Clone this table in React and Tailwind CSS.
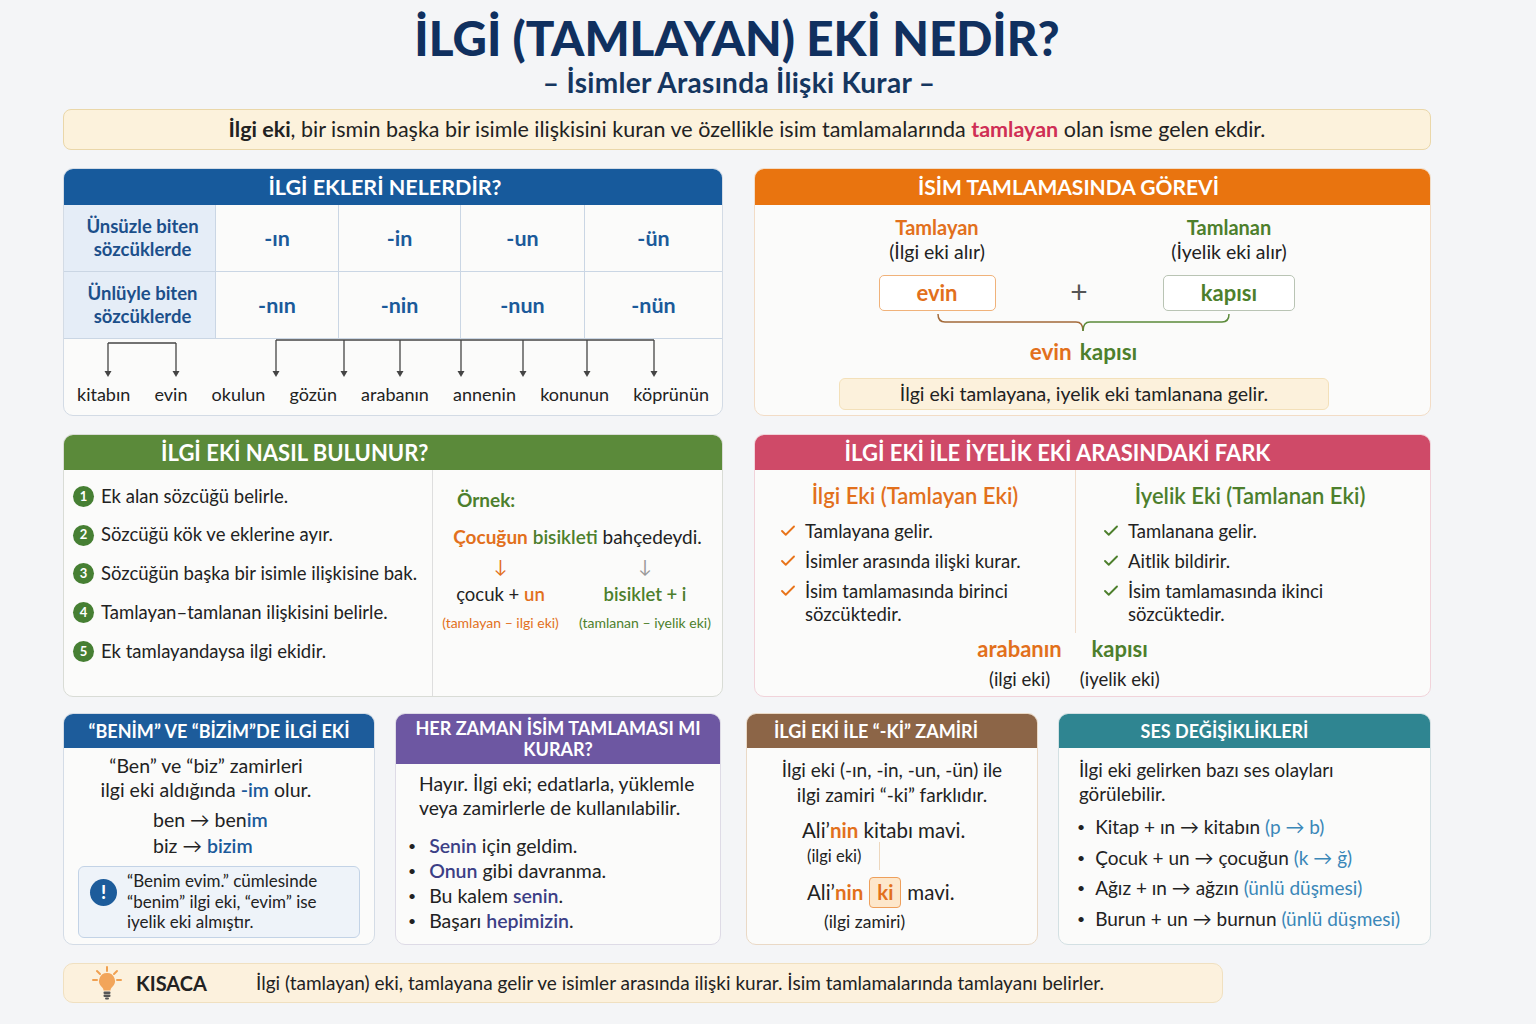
import { Check } from "lucide-react";

const Head = ({ bg, className = "", children }) => (
  <div className={`${bg} text-white font-bold flex items-center justify-center ${className}`}>
    {children}
  </div>
);

const Card = ({ className = "", children }) => (
  <div className={`rounded-[10px] border overflow-hidden flex flex-col bg-[#fbfbfa] ${className}`}>
    {children}
  </div>
);

const suffixRows = [
  { label: ["Ünsüzle biten", "sözcüklerde"], items: ["-ın", "-in", "-un", "-ün"] },
  { label: ["Ünlüyle biten", "sözcüklerde"], items: ["-nın", "-nin", "-nun", "-nün"] },
];

const words = ["kitabın", "evin", "okulun", "gözün", "arabanın", "annenin", "konunun", "köprünün"];
const arrowX = [44, 112, 212, 280, 336, 397, 459, 523, 590];

const steps = [
  "Ek alan sözcüğü belirle.",
  "Sözcüğü kök ve eklerine ayır.",
  "Sözcüğün başka bir isimle ilişkisine bak.",
  "Tamlayan–tamlanan ilişkisini belirle.",
  "Ek tamlayandaysa ilgi ekidir.",
];

const Bulb = () => (
  <svg width="30" height="34" viewBox="0 0 30 34">
    <g stroke="#f0a050" strokeWidth="2" strokeLinecap="round">
      <line x1="15" y1="1" x2="15" y2="5" />
      <line x1="5" y1="5" x2="8" y2="8" />
      <line x1="25" y1="5" x2="22" y2="8" />
      <line x1="1" y1="14" x2="5" y2="14" />
      <line x1="25" y1="14" x2="29" y2="14" />
    </g>
    <path d="M15 7a8 8 0 0 0-5 14.2c1 1 1.5 2 1.5 3.3h7c0-1.3.5-2.3 1.5-3.3A8 8 0 0 0 15 7z" fill="#f2a55a" />
    <rect x="11.5" y="25.5" width="7" height="2.5" rx="1" fill="#555" />
    <rect x="11.5" y="28.5" width="7" height="2.5" rx="1" fill="#555" />
    <rect x="13" y="31.5" width="4" height="2" rx="1" fill="#555" />
  </svg>
);

const Em = ({ children }) => <b className="text-[#3c3f86] font-semibold">{children}</b>;

export default function App() {
  return (
    <div className="min-h-[1024px] w-[1536px] bg-[#f4f5f7] font-[Lato,'Noto_Sans',sans-serif] text-[#222] pl-[63px] pr-[105px] pt-[8px]">
      {/* Title */}
      <h1 className="text-center font-black text-[#10305f] text-[47.5px] leading-[60px] pr-[20px]">
        İLGİ (TAMLAYAN) EKİ NEDİR?
      </h1>
      <div className="text-center font-bold text-[#15365f] text-[28px] leading-[28px] tracking-[0.3px] pr-[16px]">
        – İsimler Arasında İlişki Kurar –
      </div>
      <div className="mt-[13px] h-[41px] rounded-[8px] border border-[#ead7a9] bg-[#fcf2dc] flex items-center justify-center text-[21.5px]">
        <span>
          <b>İlgi eki</b>, bir ismin başka bir isimle ilişkisini kuran ve özellikle isim tamlamalarında{" "}
          <b className="text-[#cf2f55]">tamlayan</b> olan isme gelen ekdir.
        </span>
      </div>

      {/* Row 1 */}
      <div className="mt-[18px] grid grid-cols-[660px_677px] gap-[31px]">
        <Card className="h-[248px] border-[#d3dbe5]">
          <Head bg="bg-[#175a9c]" className="h-[36px] pr-[16px] text-[21.5px]">İLGİ EKLERİ NELERDİR?</Head>
          <div className="grid grid-cols-[152px_123px_122px_124px_1fr]">
            {suffixRows.map((r, i) => (
              <div key={i} className="contents">
                <div className="h-[67px] bg-[#e5edf7] border-r border-b border-[#cad6e4] flex flex-col items-center justify-center pl-[6px] text-[18.5px] leading-[23px] font-bold text-[#1c4f8a]">
                  <span>{r.label[0]}</span>
                  <span>{r.label[1]}</span>
                </div>
                {r.items.map((s, j) => (
                  <div
                    key={j}
                    className="h-[67px] border-b border-r last:border-r-0 border-[#cad6e4] flex items-center justify-center text-[21.5px] font-bold text-[#1b5a9a]"
                  >
                    {s}
                  </div>
                ))}
              </div>
            ))}
          </div>
          <svg width="658" height="40" viewBox="0 0 658 40" className="block">
            <g stroke="#444" strokeWidth="1.3" fill="none">
              <path d="M44 4H112" />
              <path d="M212 1H590" />
              {arrowX.map((x, i) => (
                <line key={i} x1={x} y1={i < 2 ? 4 : 1} x2={x} y2="33" />
              ))}
            </g>
            {arrowX.map((x, i) => (
              <path key={i} d={`M${x - 3.5} 32L${x + 3.5} 32L${x} 38Z`} fill="#444" />
            ))}
          </svg>
          <div className="mt-[5px] flex justify-between px-[13px] text-[18px] leading-[20px] text-[#222]">
            {words.map((w) => (
              <span key={w}>{w}</span>
            ))}
          </div>
        </Card>

        <Card className="h-[248px] border-[#f2dcc6]">
          <Head bg="bg-[#e9740f]" className="h-[36px] pr-[48px] text-[21px]">İSİM TAMLAMASINDA GÖREVİ</Head>
          <div className="flex pl-[62px] pt-[10px] text-[19.5px] leading-[24px]">
            <div className="w-[240px] flex flex-col items-center">
              <span className="font-bold text-[20px] text-[#e2701c]">Tamlayan</span>
              <span className="mt-[1px]">(İlgi eki alır)</span>
              <div className="mt-[11px] w-[117px] h-[36px] rounded-[5px] border border-[#f0b27a] bg-white flex items-center justify-center text-[22px] font-bold text-[#e2701c]">
                evin
              </div>
            </div>
            <div className="w-[44px] pt-[58px]">
              <div className="h-[36px] flex items-center justify-center text-[30px] text-[#555]">+</div>
            </div>
            <div className="w-[256px] flex flex-col items-center">
              <span className="font-bold text-[20px] text-[#4d7f2c]">Tamlanan</span>
              <span className="mt-[1px]">(İyelik eki alır)</span>
              <div className="mt-[11px] w-[132px] h-[36px] rounded-[5px] border border-[#b9c4b4] bg-white flex items-center justify-center text-[22px] font-bold text-[#4d7f2c]">
                kapısı
              </div>
            </div>
          </div>
          <div className="ml-[182px] w-[293px] mt-[2px] flex flex-col items-center">
            <svg width="293" height="20" viewBox="0 0 293 20" className="block">
              <path d="M1 1Q1 9 8 9H139Q146 9 146 18" stroke="#a36a3a" strokeWidth="1.5" fill="none" />
              <path d="M146 18Q146 9 153 9H285Q292 9 292 1" stroke="#5b8a3a" strokeWidth="1.5" fill="none" />
            </svg>
            <div className="text-[22.5px] font-bold leading-[26px] mt-[6px] flex gap-[8px]">
              <span className="text-[#e2701c]">evin</span>
              <span className="text-[#4d7f2c]">kapısı</span>
            </div>
          </div>
          <div className="ml-[84px] w-[490px] mt-[13px] h-[32px] rounded-[6px] border border-[#f3e0b9] bg-[#fcf1dc] flex items-center justify-center text-[19.5px]">
            İlgi eki tamlayana, iyelik eki tamlanana gelir.
          </div>
        </Card>
      </div>

      {/* Row 2 */}
      <div className="mt-[18px] grid grid-cols-[660px_677px] gap-[31px]">
        <Card className="h-[263px] border-[#d9dcd6]">
          <Head bg="bg-[#5b8a3a]" className="h-[35px] !justify-start pl-[97px] text-[22px]">İLGİ EKİ NASIL BULUNUR?</Head>
          <div className="flex-1 grid grid-cols-[369px_1fr]">
            <div className="border-r border-[#dedede] pt-[7px] pl-[9px] flex flex-col">
              {steps.map((s, i) => (
                <div key={i} className="h-[38.8px] flex items-center gap-[7px] text-[18.5px]">
                  <span className="w-[21px] h-[21px] rounded-full bg-[#467f33] text-white text-[13px] font-bold flex items-center justify-center shrink-0">
                    {i + 1}
                  </span>
                  {s}
                </div>
              ))}
            </div>
            <div className="pt-[18px] flex flex-col">
              <div className="pl-[24px] text-[19px] font-bold text-[#4d7f2c] leading-[24px]">Örnek:</div>
              <div className="mt-[13px] text-center text-[19px] leading-[24px]">
                <span className="font-bold text-[#e2701c]">Çocuğun</span>{" "}
                <span className="font-semibold text-[#4d7f2c]">bisikleti</span> bahçedeydi.
              </div>
              <div className="grid grid-cols-[135px_1fr]">
                <div className="flex flex-col items-center">
                  <span className="text-[#e2701c] text-[18px] leading-[30px] mt-[2px]">↓</span>
                  <span className="text-[18.5px] leading-[26px]">
                    çocuk + <span className="text-[#e2701c] font-semibold">un</span>
                  </span>
                  <span className="text-[14px] leading-[28px] mt-[2px] text-[#e2701c]">(tamlayan – ilgi eki)</span>
                </div>
                <div className="flex flex-col items-center">
                  <span className="text-[#999] text-[18px] leading-[30px] mt-[2px]">↓</span>
                  <span className="text-[18.5px] leading-[26px] text-[#4d7f2c] font-semibold">bisiklet + i</span>
                  <span className="text-[14px] leading-[28px] mt-[2px] text-[#4d7f2c]">(tamlanan – iyelik eki)</span>
                </div>
              </div>
            </div>
          </div>
        </Card>

        <Card className="h-[263px] border-[#f1d3da]">
          <Head bg="bg-[#cf4a68]" className="h-[35px] pr-[70px] text-[22px]">İLGİ EKİ İLE İYELİK EKİ ARASINDAKİ FARK</Head>
          <div className="grid grid-cols-[321px_1fr] h-[163px]">
            <div className="border-r border-[#f0dccb] pt-[13px]">
              <div className="text-center text-[22px] font-semibold text-[#e2701c] leading-[26px]">İlgi Eki (Tamlayan Eki)</div>
              <ul className="mt-[11px] pl-[24px] flex flex-col gap-[7px] text-[18.5px] leading-[23px]">
                <li className="flex gap-[8px]"><Check size={18} strokeWidth={2.5} className="text-[#e8741a] mt-[2px] shrink-0" />Tamlayana gelir.</li>
                <li className="flex gap-[8px]"><Check size={18} strokeWidth={2.5} className="text-[#e8741a] mt-[2px] shrink-0" />İsimler arasında ilişki kurar.</li>
                <li className="flex gap-[8px]"><Check size={18} strokeWidth={2.5} className="text-[#e8741a] mt-[2px] shrink-0" /><span>İsim tamlamasında birinci<br />sözcüktedir.</span></li>
              </ul>
            </div>
            <div className="pt-[13px]">
              <div className="text-center text-[22px] font-semibold text-[#4d7f2c] leading-[26px] pr-[6px]">İyelik Eki (Tamlanan Eki)</div>
              <ul className="mt-[11px] pl-[26px] flex flex-col gap-[7px] text-[18.5px] leading-[23px]">
                <li className="flex gap-[8px]"><Check size={18} strokeWidth={2.5} className="text-[#4d7f2c] mt-[2px] shrink-0" />Tamlanana gelir.</li>
                <li className="flex gap-[8px]"><Check size={18} strokeWidth={2.5} className="text-[#4d7f2c] mt-[2px] shrink-0" />Aitlik bildirir.</li>
                <li className="flex gap-[8px]"><Check size={18} strokeWidth={2.5} className="text-[#4d7f2c] mt-[2px] shrink-0" /><span>İsim tamlamasında ikinci<br />sözcüktedir.</span></li>
              </ul>
            </div>
          </div>
          <div className="flex justify-center gap-[18px] pr-[48px] mt-[3px]">
            <div className="flex flex-col items-center">
              <span className="text-[22px] font-bold text-[#e2701c] leading-[26px]">arabanın</span>
              <span className="text-[18.5px] leading-[24px] mt-[5px]">(ilgi eki)</span>
            </div>
            <div className="flex flex-col items-center">
              <span className="text-[22px] font-bold text-[#4d7f2c] leading-[26px]">kapısı</span>
              <span className="text-[18.5px] leading-[24px] mt-[5px]">(iyelik eki)</span>
            </div>
          </div>
        </Card>
      </div>

      {/* Row 3 */}
      <div className="mt-[16px] flex gap-[20px]">
        <Card className="w-[312px] h-[232px] border-[#d4dce6]">
          <Head bg="bg-[#1d5c9b]" className="h-[34px] text-[18px]">“BENİM” VE “BİZİM”DE İLGİ EKİ</Head>
          <div className="pt-[6px] pr-[26px] text-center text-[19.5px] leading-[24px]">
            <div>“Ben” ve “biz” zamirleri</div>
            <div>
              ilgi eki aldığında <span className="text-[#1b5a9a] font-semibold">-im</span> olur.
            </div>
          </div>
          <div className="pl-[89px] mt-[5px] text-[19.5px] leading-[26px]">
            <div>ben → ben<span className="text-[#1b5a9a] font-semibold">im</span></div>
            <div>biz → <span className="text-[#1b5a9a] font-semibold">bizim</span></div>
          </div>
          <div className="mx-[14px] mt-[7px] h-[72px] rounded-[6px] border border-[#c3d3e6] bg-[#eef3f9] flex items-center gap-[10px] pl-[11px]">
            <span className="w-[27px] h-[27px] rounded-full bg-[#1d5c9b] text-white font-black text-[18px] flex items-center justify-center shrink-0 -mt-[20px]">!</span>
            <div className="text-[17px] leading-[20.5px]">
              “Benim evim.” cümlesinde
              <br />“benim” ilgi eki, “evim” ise
              <br />iyelik eki almıştır.
            </div>
          </div>
        </Card>

        <Card className="w-[326px] h-[232px] mr-[5px] border-[#dedbe6]">
          <Head bg="bg-[#6d57a2]" className="h-[50px] text-[18px] leading-[21px] text-center">
            HER ZAMAN İSİM TAMLAMASI MI
            <br />
            KURAR?
          </Head>
          <div className="pt-[8px] pl-[23px] text-[19.3px] leading-[24px]">
            Hayır. İlgi eki; edatlarla, yüklemle
            <br />
            veya zamirlerle de kullanılabilir.
          </div>
          <ul className="mt-[13px] pl-[12px] text-[19.5px] leading-[25px]">
            {[
              [<Em key="a">Senin</Em>, " için geldim."],
              [<Em key="a">Onun</Em>, " gibi davranma."],
              ["Bu kalem ", <Em key="a">senin</Em>, "."],
              ["Başarı ", <Em key="a">hepimizin</Em>, "."],
            ].map((c, i) => (
              <li key={i} className="flex gap-[13px]">
                <span className="text-[14px]">•</span>
                <span>{c}</span>
              </li>
            ))}
          </ul>
        </Card>

        <Card className="w-[292px] h-[232px] border-[#ead9c6]">
          <Head bg="bg-[#8c6547]" className="h-[34px] text-[18px] pr-[32px]">İLGİ EKİ İLE “-Kİ” ZAMİRİ</Head>
          <div className="pt-[9px] text-center text-[19px] leading-[25px]">
            <div>İlgi eki (-ın, -in, -un, -ün) ile</div>
            <div>ilgi zamiri “-ki” farklıdır.</div>
          </div>
          <div className="pl-[55px] mt-[11px] text-[20.5px] leading-[24px]">
            Ali’<b className="text-[#e2701c]">nin</b> kitabı mavi.
          </div>
          <div className="flex pl-[60px] h-[30px] items-start">
            <span className="text-[16.5px] leading-[20px] mt-[4px]">(ilgi eki)</span>
            <span className="ml-[18px] w-px h-[28px] bg-[#edd7bd]" />
          </div>
          <div className="pl-[60px] mt-[3px] text-[20.5px] leading-[34px] flex items-center">
            Ali’<b className="text-[#e2701c]">nin</b>
            <span className="mx-[6px] w-[32px] h-[31px] rounded-[4px] border border-[#ee9f5b] bg-[#fde7cb] flex items-center justify-center font-bold text-[#e2701c]">ki</span>
            mavi.
          </div>
          <div className="pl-[77px] text-[17.5px] leading-[20px] mt-[3px]">(ilgi zamiri)</div>
        </Card>

        <Card className="w-[373px] h-[232px] border-[#d3e0e3]">
          <Head bg="bg-[#2f8591]" className="h-[34px] text-[18px] pr-[40px]">SES DEĞİŞİKLİKLERİ</Head>
          <div className="pt-[10px] pl-[20px] text-[18.8px] leading-[24px]">
            İlgi eki gelirken bazı ses olayları
            <br />
            görülebilir.
          </div>
          <ul className="mt-[6px] pl-[18px] text-[19px] leading-[30.5px]">
            {[
              ["Kitap + ın → kitabın ", "(p → b)"],
              ["Çocuk + un → çocuğun ", "(k → ğ)"],
              ["Ağız + ın → ağzın ", "(ünlü düşmesi)"],
              ["Burun + un → burnun ", "(ünlü düşmesi)"],
            ].map(([a, b], i) => (
              <li key={i} className="flex gap-[10px]">
                <span className="text-[14px]">•</span>
                <span>
                  {a}
                  <span className="text-[#3a87b8]">{b}</span>
                </span>
              </li>
            ))}
          </ul>
        </Card>
      </div>

      {/* Bottom */}
      <div className="mt-[18px] w-[1160px] h-[40px] rounded-[10px] border border-[#f0e0c0] bg-[#fcf1dd] flex items-center pl-[28px]">
        <Bulb />
        <span className="ml-[14px] w-[120px] font-bold text-[20px]">KISACA</span>
        <span className="text-[19px]">
          İlgi (tamlayan) eki, tamlayana gelir ve isimler arasında ilişki kurar. İsim tamlamalarında tamlayanı belirler.
        </span>
      </div>
    </div>
  );
}
